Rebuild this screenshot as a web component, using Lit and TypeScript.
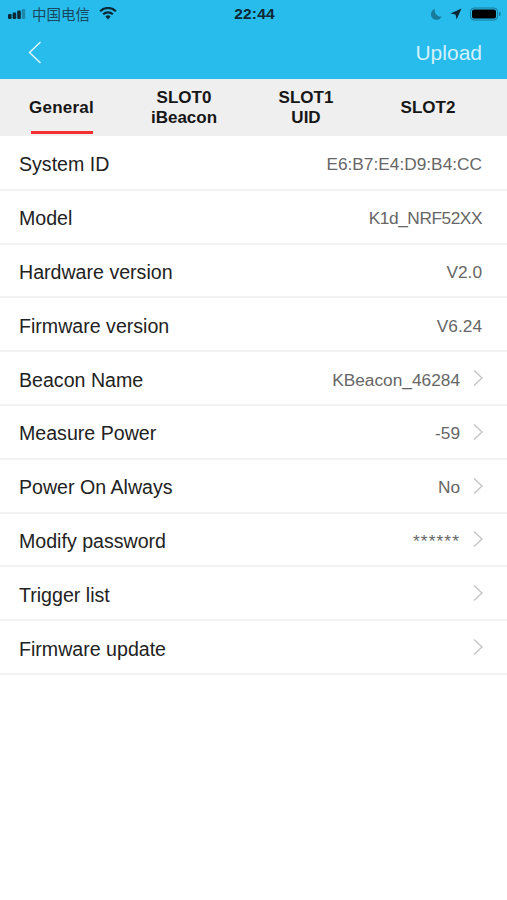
import { LitElement, html, css, svg } from 'lit';
import { customElement } from 'lit/decorators.js';

const rows = [
  { label: 'System ID', value: 'E6:B7:E4:D9:B4:CC' },
  { label: 'Model', value: 'K1d_NRF52XX', fit: 'tight' },
  { label: 'Hardware version', value: 'V2.0' },
  { label: 'Firmware version', value: 'V6.24' },
  { label: 'Beacon Name', value: 'KBeacon_46284', more: true },
  { label: 'Measure Power', value: '-59', more: true },
  { label: 'Power On Always', value: 'No', more: true },
  { label: 'Modify password', value: '******', more: true, fit: 'mask' },
  { label: 'Trigger list', value: '', more: true },
  { label: 'Firmware update', value: '', more: true },
];

const tabs = [
  { top: 'General', active: true },
  { top: 'SLOT0', bottom: 'iBeacon' },
  { top: 'SLOT1', bottom: 'UID' },
  { top: 'SLOT2' },
];

const chevron = svg`<path d="M2 1.5l8 7.5-8 7.5" fill="none" stroke="currentColor" stroke-width="1.3"/>`;

@customElement('app-root')
export class AppRoot extends LitElement {
  static styles = css`
    :host {
      display: block;
      width: 507px;
      height: 900px;
      background: #fff;
      font-family: 'Liberation Sans', Arial, sans-serif;
      overflow: hidden;
    }

    .header {
      background: #27bcec;
      height: 79px;
      display: flex;
      flex-direction: column;
    }

    .status {
      height: 27px;
      display: grid;
      grid-template-columns: 1fr auto 1fr;
      align-items: center;
      padding: 0 6px 0 8px;
      color: #0d2733;
    }
    .status-left { display: flex; align-items: center; gap: 4px; }
    .carrier { font-family: 'Noto Sans CJK SC', sans-serif; font-size: 14.5px; color: #17485c; }
    .wifi { margin-left: 5px; }
    .status-time { font-weight: bold; font-size: 15.5px; letter-spacing: .2px; }
    .status-right { display: flex; align-items: center; justify-content: flex-end; gap: 8px; }

    .nav {
      flex: 1;
      display: flex;
      align-items: center;
      justify-content: space-between;
      padding: 0 25px 0 28px;
      color: #fff;
    }
    .upload { font-size: 21px; color: #d4f1fb; }

    .tabs {
      height: 57px;
      background: #efefef;
      display: grid;
      grid-template-columns: 123px 122px 122px 122px;
    }
    .tab {
      position: relative;
      display: flex;
      flex-direction: column;
      align-items: center;
      justify-content: center;
      font-size: 17px;
      line-height: 20px;
      font-weight: bold;
      color: #161616;
    }
    .tab.active { letter-spacing: .25px; }
    .tab.active::after {
      content: '';
      position: absolute;
      left: 31px;
      width: 62px;
      bottom: 2px;
      height: 3px;
      background: #f3302e;
    }

    .list { padding-top: 1px; }
    .row {
      box-sizing: border-box;
      height: 53.8px;
      border-bottom: 2px solid #f3f3f3;
      display: flex;
      align-items: center;
      justify-content: space-between;
      padding: 4px 25px 0 19px;
      font-size: 19.6px;
      color: #222;
    }
    .value {
      display: flex;
      align-items: center;
      font-size: 17.3px;
      color: #666;
    }
    .value.tight { letter-spacing: -.45px; }
    .value.mask { letter-spacing: 1.1px; }
    .arrow {
      width: 11px;
      height: 18px;
      margin-left: 12px;
      margin-right: -1px;
      color: #c2c2c2;
      position: relative;
      top: -2px;
    }
  `;

  render() {
    return html`
      <div class="header">
        <div class="status">
          <div class="status-left">
            <svg width="20" height="12" viewBox="0 0 20 12">
              <rect x="0" y="6" width="3.6" height="5" rx="1.2" fill="#0d2733"/>
              <rect x="4.6" y="4.5" width="3.6" height="6.5" rx="1.2" fill="#0d2733"/>
              <rect x="9.2" y="2.5" width="3.6" height="8.5" rx="1.2" fill="#0d2733"/>
              <rect x="13.8" y="1" width="3.4" height="10" rx="1.2" fill="#0d2733" opacity=".35"/>
            </svg>
            <span class="carrier">中国电信</span>
            <svg class="wifi" width="18" height="13" viewBox="0 0 18 13">
              <path d="M9 12.5L6.4 9.6a3.7 3.7 0 0 1 5.2 0zM4.9 8.1L3.4 6.5a8 8 0 0 1 11.2 0L13.1 8.1a5.9 5.9 0 0 0-8.2 0zM1.9 5L.4 3.4a12.3 12.3 0 0 1 17.2 0L16.1 5a10.2 10.2 0 0 0-14.2 0z" fill="#0d2733"/>
            </svg>
          </div>
          <div class="status-time">22:44</div>
          <div class="status-right">
            <svg width="11" height="12" viewBox="0 0 11 12"><path d="M4 1a5.5 5.5 0 1 0 6.5 7.5A6 6 0 0 1 4 1z" fill="#1a7a9c"/></svg>
            <svg width="12" height="12" viewBox="0 0 12 12"><path d="M11.5.5L6.6 11.5 5.5 6.5.5 5.4z" fill="#0d2733"/></svg>
            <svg width="31" height="14" viewBox="0 0 31 14">
              <rect x=".5" y="1" width="27" height="12" rx="3.5" fill="none" stroke="#1a7a9c"/>
              <rect x="2" y="2.5" width="24" height="9" rx="2" fill="#000"/>
              <rect x="29" y="5" width="1.5" height="4" rx=".7" fill="#1a7a9c"/>
            </svg>
          </div>
        </div>
        <div class="nav">
          <svg width="14" height="24" viewBox="0 0 14 24"><path d="M12.5 1L1.5 11.5 12.5 22" fill="none" stroke="#e6f7fd" stroke-width="1.4"/></svg>
          <span class="upload">Upload</span>
        </div>
      </div>
      <div class="tabs">
        ${tabs.map(t => html`
          <div class="tab ${t.active ? 'active' : ''}">
            <span>${t.top}</span>
            ${t.bottom ? html`<span>${t.bottom}</span>` : ''}
          </div>
        `)}
      </div>
      <div class="list">
        ${rows.map(r => html`
          <div class="row">
            <span>${r.label}</span>
            <span class="value ${r.fit ?? ''}">
              ${r.value}
              ${r.more ? html`<svg class="arrow" viewBox="0 0 11 18">${chevron}</svg>` : ''}
            </span>
          </div>
        `)}
      </div>
    `;
  }
}
